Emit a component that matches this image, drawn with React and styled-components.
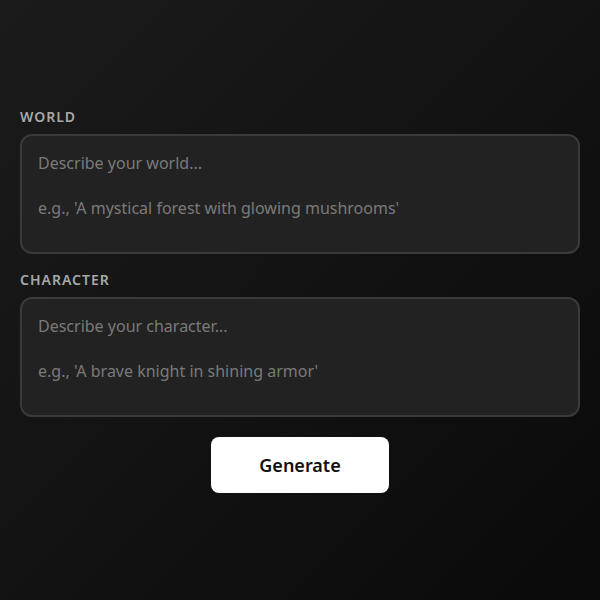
import React from "react";
import styled, { createGlobalStyle } from "styled-components";

const Global = createGlobalStyle`
  * { box-sizing: border-box; }
  html, body { margin: 0; padding: 0; }
  body {
    font-family: "Noto Sans", "Open Sans", sans-serif;
    background: #111;
  }
`;

const Page = styled.div`
  min-height: 100vh;
  display: flex;
  align-items: center;
  justify-content: center;
  padding: 20px;
  background: linear-gradient(135deg, #1b1b1b 0%, #0a0a0a 100%);
`;

const Form = styled.div`
  width: 100%;
  display: flex;
  flex-direction: column;
  gap: 16px;
`;

const Field = styled.div`
  display: flex;
  flex-direction: column;
  gap: 8px;
`;

const Label = styled.label`
  font-size: 14px;
  line-height: 19px;
  font-weight: 600;
  letter-spacing: 1px;
  color: #a8a8a8;
  text-transform: uppercase;
`;

const TextArea = styled.textarea`
  height: 120px;
  resize: none;
  padding: 16px;
  border: 2px solid #3a3a3a;
  border-radius: 12px;
  background: #222;
  color: #ddd;
  font-family: inherit;
  font-size: 16px;
  line-height: 22.4px;
  outline: none;
  &::placeholder { color: #7a7a7a; }
`;

const Actions = styled.div`
  display: flex;
  justify-content: center;
  padding-top: 4px;
`;

const Button = styled.button`
  padding: 16px 48px;
  border: none;
  border-radius: 8px;
  background: #fff;
  color: #111;
  font-family: inherit;
  font-size: 18px;
  line-height: 24px;
  font-weight: 600;
  cursor: pointer;
`;

export default function App() {
  return (
    <>
      <Global />
      <Page>
        <Form>
          <Field>
            <Label>World</Label>
            <TextArea placeholder={"Describe your world...\n\ne.g., 'A mystical forest with glowing mushrooms'"} />
          </Field>
          <Field>
            <Label>Character</Label>
            <TextArea placeholder={"Describe your character...\n\ne.g., 'A brave knight in shining armor'"} />
          </Field>
          <Actions>
            <Button>Generate</Button>
          </Actions>
        </Form>
      </Page>
    </>
  );
}
